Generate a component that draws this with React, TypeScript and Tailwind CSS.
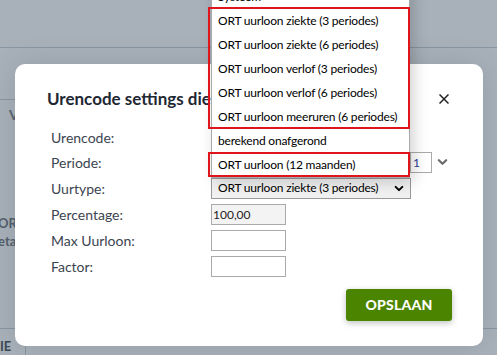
import React from 'react';

const font = { fontFamily: 'Lato, "Noto Sans", sans-serif' };

const OPTIONS = [
  'Systeem',
  'ORT uurloon ziekte (3 periodes)',
  'ORT uurloon ziekte (6 periodes)',
  'ORT uurloon verlof (3 periodes)',
  'ORT uurloon verlof (6 periodes)',
  'ORT uurloon meeruren (6 periodes)',
  'berekend onafgerond',
  'ORT uurloon (12 maanden)',
];

function Chevron({ className }: { className?: string }) {
  return (
    <svg viewBox="0 0 12 8" className={className} fill="none" stroke="currentColor" strokeWidth="2.4" strokeLinecap="round" strokeLinejoin="round">
      <polyline points="2,2 6,6 10,2" />
    </svg>
  );
}

function Row({ label, children }: { label: string; children?: React.ReactNode }) {
  return (
    <div className="flex items-center h-[21px]">
      <div className="w-[160px] text-[14px] text-[#3b4450]">{label}</div>
      {children}
    </div>
  );
}

export default function App() {
  return (
    <div className="relative w-[497px] h-[355px] overflow-hidden bg-[#a8b1ba]" style={font}>
      {/* page behind the overlay */}
      <div className="h-[48px] border-b border-[#8896a4]" />
      <div className="mt-[51px] w-[16px] border-b border-[#8896a4]" />
      <div className="mt-[8px] pl-[9px] text-[14px] font-bold text-[#5a6674] leading-none">V</div>
      <div className="mt-[92px] text-[13px] font-bold text-[#55606c] leading-[18px] -ml-[2px]">
        <div>OR</div>
        <div>eta</div>
      </div>
      <div className="mt-[78px] flex h-[31px] border-t border-[#8896a4]">
        <div className="w-[26px] border-r border-[#8896a4] pt-[8px] text-[13px] font-bold text-[#3e4a58]">IE</div>
      </div>

      {/* modal */}
      <div className="absolute left-[15px] top-[64px] w-[468px] h-[282px] rounded-[10px] bg-white shadow-[0_0_30px_rgba(0,0,0,0.12)]">
        <div className="flex items-center justify-between pl-[32px] pr-[34px] pt-[22px]">
          <h2 className="text-[17px] font-bold text-[#1e2833] whitespace-nowrap">Urencode settings die periode</h2>
          <svg viewBox="0 0 10 10" className="w-[10px] h-[10px] text-[#222]" stroke="currentColor" strokeWidth="1.5">
            <line x1="0.5" y1="0.5" x2="9.5" y2="9.5" />
            <line x1="9.5" y1="0.5" x2="0.5" y2="9.5" />
          </svg>
        </div>

        <div className="mt-[17px] pl-[36px] flex flex-col gap-[5px]">
          <div className="flex items-center h-[18px]">
            <div className="w-[160px] text-[14px] text-[#3b4450]">Urencode:</div>
            <div className="w-[199px] h-[18px] border border-[#999]" />
          </div>
          <Row label="Periode:">
            <div className="w-[199px] h-[21px] border border-[#999]" />
            <div className="w-[22px] h-[21px] border border-[#aaa] text-[12px] text-[#2a3a9a] pl-[2px] leading-[19px]">1</div>
            <Chevron className="ml-[5px] w-[11px] h-[8px] text-[#6b6b6b]" />
          </Row>
          <Row label="Uurtype:">
            <div className="w-[200px] h-[21px] border border-[#999] bg-[#f1f1f1] flex items-center justify-between pl-[6px] pr-[6px]">
              <span className="text-[12px] tracking-[-0.2px] text-black whitespace-nowrap">ORT uurloon ziekte (3 periodes)</span>
              <Chevron className="w-[10px] h-[7px] text-black" />
            </div>
          </Row>
          <Row label="Percentage:">
            <div className="w-[75px] h-[21px] border border-[#aaa] bg-[#f3f3f3] pl-[1px] text-[12px] leading-[19px] text-[#222]">100,00</div>
          </Row>
          <Row label="Max Uurloon:">
            <div className="w-[75px] h-[21px] border border-[#aaa] bg-white" />
          </Row>
          <Row label="Factor:">
            <div className="w-[75px] h-[21px] border border-[#aaa] bg-white" />
          </Row>
        </div>

        <div className="flex justify-end pr-[31px] mt-[12px]">
          <button className="w-[106px] h-[32px] rounded-[3px] bg-[#4b8500] text-white text-[14px] font-black tracking-[0.2px] shadow-[0_2px_6px_rgba(0,0,0,0.25)]">
            OPSLAAN
          </button>
        </div>
      </div>

      {/* open dropdown list */}
      <div className="absolute left-[211px] top-[-16px] w-[199px] bg-white border border-[#a9a9a9] shadow-[4px_4px_14px_rgba(0,0,0,0.18)]">
        {OPTIONS.map((o) => (
          <div key={o} className="h-[24px] pl-[6px] flex items-center text-[12px] tracking-[-0.2px] text-black whitespace-nowrap">
            {o}
          </div>
        ))}
      </div>
      <div className="absolute left-[208px] top-[7px] w-[202px] h-[122px] border-2 border-[#e0151c]" />
      <div className="absolute left-[208px] top-[152px] w-[202px] h-[25px] border-2 border-[#e0151c]" />
    </div>
  );
}
